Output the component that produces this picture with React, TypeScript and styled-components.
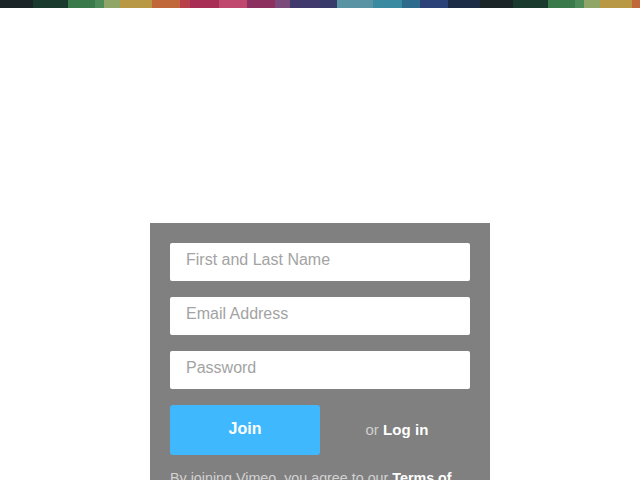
import React from "react";
import styled, { createGlobalStyle } from "styled-components";

const Global = createGlobalStyle`
  html, body { margin: 0; padding: 0; background: #ffffff; }
  body { font-family: "Liberation Sans", Arial, Helvetica, sans-serif; overflow: hidden; }
  * { box-sizing: border-box; }
`;

const Page = styled.div`
  width: 640px;
  height: 480px;
  overflow: hidden;
  display: flex;
  flex-direction: column;
`;

const Strip = styled.div`
  display: flex;
  height: 8px;
  width: 640px;
  overflow: hidden;
  flex: none;
`;

const Segment = styled.div<{ $w: number; $c: string }>`
  flex: none;
  width: ${(p) => p.$w}px;
  height: 100%;
  background: ${(p) => p.$c};
`;

const Main = styled.main`
  display: flex;
  justify-content: center;
  padding-top: 215px;
`;

const Panel = styled.form`
  width: 340px;
  background: #808080;
  padding: 20px 20px 24px;
  display: flex;
  flex-direction: column;
  gap: 16px;
`;

const Field = styled.input`
  display: block;
  width: 300px;
  height: 38px;
  border: none;
  border-radius: 2px;
  background: #ffffff;
  padding: 0 16px 4px;
  font-family: "Liberation Sans", Arial, sans-serif;
  font-size: 16px;
  color: #333;
  outline: none;
  &::placeholder { color: #a3a3a3; }
`;

const ActionRow = styled.div`
  display: flex;
  align-items: center;
`;

const JoinButton = styled.button`
  width: 150px;
  height: 50px;
  border: none;
  border-radius: 3px;
  background: #3fb8fd;
  color: #ffffff;
  font-family: "Liberation Sans", Arial, sans-serif;
  font-weight: bold;
  font-size: 16px;
  padding: 0 0 2px;
  cursor: pointer;
`;

const LoginText = styled.div`
  flex: 1;
  text-align: center;
  font-size: 15px;
  color: #cfcfcf;
  padding: 0 0 2px 4px;
  b { color: #ffffff; font-weight: bold; letter-spacing: 0.1px; }
`;

const Terms = styled.p`
  margin: -3px 0 0;
  font-size: 14.3px;
  line-height: 20px;
  color: #d2d2d2;
  b { color: #ffffff; }
`;

const segments: [number, string][] = [
  [33, "#1b2527"],
  [35, "#1b3a2e"],
  [27, "#3a7a4a"],
  [9, "#4d8c58"],
  [16, "#8fa666"],
  [32, "#b89845"],
  [28, "#c0683a"],
  [10, "#b8404a"],
  [29, "#a82e55"],
  [28, "#c0486e"],
  [28, "#8c3060"],
  [15, "#7a4a7a"],
  [30, "#403a6c"],
  [17, "#383a6a"],
  [36, "#5a94a4"],
  [29, "#3a8aa2"],
  [18, "#2e6a8c"],
  [28, "#2a4278"],
  [32, "#1c2c46"],
];

export default function App() {
  const all = [...segments, ...segments];
  return (
    <Page>
      <Global />
      <Strip>
        {all.map(([w, c], i) => (
          <Segment key={i} $w={w} $c={c} />
        ))}
      </Strip>
      <Main>
        <Panel onSubmit={(e) => e.preventDefault()}>
          <Field type="text" placeholder="First and Last Name" />
          <Field type="email" placeholder="Email Address" />
          <Field type="password" placeholder="Password" />
          <ActionRow>
            <JoinButton type="submit">Join</JoinButton>
            <LoginText>
              or <b>Log in</b>
            </LoginText>
          </ActionRow>
          <Terms>
            By joining Vimeo, you agree to our <b>Terms of Service</b> and{" "}
            <b>Privacy Policy</b>.
          </Terms>
        </Panel>
      </Main>
    </Page>
  );
}
